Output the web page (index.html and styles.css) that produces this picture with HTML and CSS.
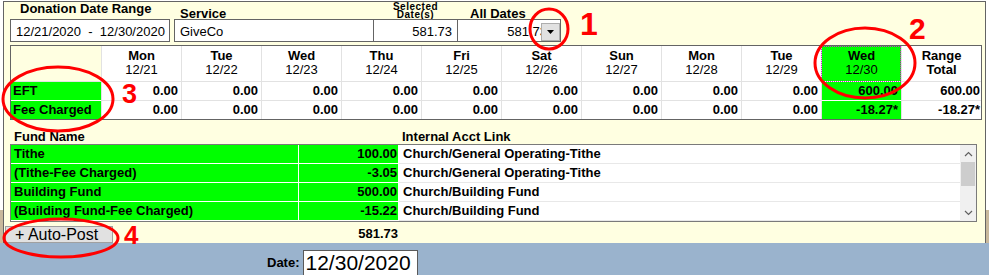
FILE: index.html
```html
<!DOCTYPE html>
<html>
<head>
<meta charset="utf-8">
<link rel="stylesheet" href="styles.css">
</head>
<body>
<div class="screen">
  <div class="top">
    <div class="panel">
      <div class="hdr">
        <div class="fld f-range">
          <div class="lbl">Donation Date Range</div>
          <div class="box">12/21/2020&nbsp;&nbsp;-&nbsp;&nbsp;12/30/2020</div>
        </div>
        <div class="fld f-svc">
          <div class="lbl lbl-low">Service</div>
          <div class="box">GiveCo</div>
        </div>
        <div class="fld f-sel">
          <div class="lbl lbl-small"><span class="ln">Selected</span><span class="ln">Date(s)</span></div>
          <div class="box num">581.73</div>
        </div>
        <div class="fld f-all">
          <div class="lbl lbl-low">All Dates</div>
          <div class="box num">581.73<span class="drop"><svg width="7" height="4" viewBox="0 0 7 4"><polygon points="0,0 7,0 3.5,4" fill="#000"/></svg></span></div>
        </div>
      </div>

      <div class="grid">
        <div class="gc corner"></div>
        <div class="gc gh">Mon<span class="d">12/21</span></div>
        <div class="gc gh">Tue<span class="d">12/22</span></div>
        <div class="gc gh">Wed<span class="d">12/23</span></div>
        <div class="gc gh">Thu<span class="d">12/24</span></div>
        <div class="gc gh">Fri<span class="d">12/25</span></div>
        <div class="gc gh">Sat<span class="d">12/26</span></div>
        <div class="gc gh">Sun<span class="d">12/27</span></div>
        <div class="gc gh">Mon<span class="d">12/28</span></div>
        <div class="gc gh">Tue<span class="d">12/29</span></div>
        <div class="gc gh sel focus">Wed<span class="d">12/30</span></div>
        <div class="gc gh">Range<span class="d b">Total</span></div>

        <div class="gc rl r1">EFT</div>
        <div class="gc v r1">0.00</div>
        <div class="gc v r1">0.00</div>
        <div class="gc v r1">0.00</div>
        <div class="gc v r1">0.00</div>
        <div class="gc v r1">0.00</div>
        <div class="gc v r1">0.00</div>
        <div class="gc v r1">0.00</div>
        <div class="gc v r1">0.00</div>
        <div class="gc v r1">0.00</div>
        <div class="gc v r1 sel">600.00</div>
        <div class="gc v r1 last">600.00</div>

        <div class="gc rl">Fee Charged</div>
        <div class="gc v">0.00</div>
        <div class="gc v">0.00</div>
        <div class="gc v">0.00</div>
        <div class="gc v">0.00</div>
        <div class="gc v">0.00</div>
        <div class="gc v">0.00</div>
        <div class="gc v">0.00</div>
        <div class="gc v">0.00</div>
        <div class="gc v">0.00</div>
        <div class="gc v sel">-18.27*</div>
        <div class="gc v last">-18.27*</div>
      </div>

      <div class="fheads">
        <span class="fh-name">Fund Name</span>
        <span class="fh-link">Internal Acct Link</span>
      </div>

      <div class="list">
        <div class="rows">
          <div class="row"><div class="c-name">Tithe</div><div class="c-amt">100.00</div><div class="c-link">Church/General Operating-Tithe</div></div>
          <div class="row"><div class="c-name">(Tithe-Fee Charged)</div><div class="c-amt">-3.05</div><div class="c-link">Church/General Operating-Tithe</div></div>
          <div class="row"><div class="c-name">Building Fund</div><div class="c-amt">500.00</div><div class="c-link">Church/Building Fund</div></div>
          <div class="row"><div class="c-name">(Building Fund-Fee Charged)</div><div class="c-amt">-15.22</div><div class="c-link">Church/Building Fund</div></div>
        </div>
        <div class="sbar">
          <div class="sb-btn"><svg width="9" height="6" viewBox="0 0 9 6"><path d="M1 5 L4.5 1.5 L8 5" fill="none" stroke="#606060" stroke-width="1.2"/></svg></div>
          <div class="sb-track"><div class="thumb"></div></div>
          <div class="sb-btn"><svg width="9" height="6" viewBox="0 0 9 6"><path d="M1 1 L4.5 4.5 L8 1" fill="none" stroke="#606060" stroke-width="1.2"/></svg></div>
        </div>
      </div>

      <div class="foot">
        <button class="btn">+ Auto-Post</button>
        <span class="total">581.73</span>
      </div>
    </div>
  </div>

  <div class="datebar">
    <span class="dlbl">Date:</span>
    <div class="dbox">12/30/2020</div>
  </div>

  <svg class="marks" width="989" height="275" viewBox="0 0 989 275">
    <ellipse cx="549" cy="29" rx="19" ry="20" fill="none" stroke="#ff0000" stroke-width="3"/>
    <ellipse cx="865" cy="63" rx="50" ry="35" fill="none" stroke="#ff0000" stroke-width="3"/>
    <ellipse cx="58" cy="99" rx="55" ry="32" fill="none" stroke="#ff0000" stroke-width="3"/>
    <ellipse cx="61" cy="238" rx="57" ry="19" fill="none" stroke="#ff0000" stroke-width="3"/>
  </svg>
  <span class="mk mk1">1</span>
  <span class="mk mk2">2</span>
  <span class="mk mk3">3</span>
  <span class="mk mk4">4</span>
</div>
</body>
</html>
```

FILE: styles.css
```css
* { box-sizing: border-box; }
body {
  margin: 0;
  font-family: "Liberation Sans", Arial, sans-serif;
  font-size: 13px;
  color: #000;
  background: #9ab3cd;
}
.screen { position: relative; width: 989px; height: 275px; overflow: hidden; }
.top {
  height: 243px;
  padding: 1px 0 0 3px;
  background: linear-gradient(#ffffff 0 210px, #c8b89c 210px);
}
.panel {
  width: 983px;
  height: 242px;
  border: 1px solid #646464;
  border-bottom: none;
  background: #ffffe1;
}

/* header */
.hdr { display: flex; align-items: flex-start; height: 40px; margin-bottom: 3px; padding-left: 6px; }
.fld { display: flex; flex-direction: column; }
.lbl { height: 17px; font-weight: bold; line-height: 13px; white-space: nowrap; }
.lbl-low { padding-top: 5px; }
.lbl-small {
  display: flex;
  flex-direction: column;
  align-items: center;
  font-size: 10px;
  line-height: 8px;
  letter-spacing: 0.5px;
  padding-top: 1px;
}
.lbl-small .ln { display: block; height: 8px; }
.box {
  height: 23px;
  border: 1px solid #646464;
  background: #fff;
  padding: 2px 5px 0 5px;
  line-height: 19px;
  white-space: nowrap;
}
.num { text-align: right; }
.f-range { width: 160px; }
.f-range .lbl { padding-left: 10px; }
.f-svc { width: 200px; margin-left: 4px; }
.f-svc .lbl { padding-left: 6px; }
.f-sel { width: 85px; margin-left: -1px; }
.f-all { width: 104px; margin-left: -1px; }
.f-all .lbl { padding-left: 13px; }
.f-all .box { position: relative; padding-right: 13px; }
.drop {
  position: absolute;
  right: 0; top: 3px; bottom: 0;
  width: 19px;
  background: #e1e1e1;
  border: 1px solid #adadad;
  display: flex; align-items: center; justify-content: center;
}
.drop svg { display: block; }

/* grid */
.grid {
  margin-left: 6px;
  width: 972px;
  border: 1px solid #646464;
  display: grid;
  grid-template-columns: 90px repeat(11, 80px);
  grid-template-rows: 36px 19px 18px;
}
.gc { border-left: 1px solid #e2e2e2; white-space: nowrap; overflow: hidden; }
.corner { border-left: none; border-bottom: 1px solid #e2e2e2; }
.gh {
  background: #fff;
  text-align: center;
  padding-top: 3px;
  line-height: 14px;
  font-weight: bold;
  border-bottom: 1px solid #e2e2e2;
}
.gh .d { display: block; font-weight: normal; }
.gh .d.b { font-weight: bold; }
.gh.sel { border-bottom-color: #fff; }
.focus { outline: 1px dotted #d020d0; outline-offset: -1px; }
.rl {
  border-left: none;
  background: #00ff00;
  font-weight: bold;
  padding-left: 2px;
  line-height: 18px;
}
.rl.r1 { border-bottom: 1px solid #fff; }
.v {
  background: #fff;
  text-align: right;
  padding-right: 3px;
  font-weight: bold;
  line-height: 18px;
}
.v.r1 { border-bottom: 1px solid #e2e2e2; }
.v.last { padding-right: 1px; }
.sel { background: #00ff00; }
.v.r1.sel { border-bottom-color: #fff; }

/* fund list */
.fheads { display: flex; height: 24px; padding-top: 10px; line-height: 14px; font-weight: bold; }
.fh-name { margin-left: 10px; width: 388px; }
.list {
  margin-left: 6px;
  width: 967px;
  height: 78px;
  border: 1px solid #7a7a7a;
  background: #fff;
  display: flex;
}
.rows { flex: 1; }
.row { display: flex; height: 19px; line-height: 18px; font-weight: bold; white-space: nowrap; }
.c-name { width: 288px; background: #00ff00; border-right: 1px solid #fff; border-bottom: 1px solid #fff; padding-left: 3px; }
.c-amt { width: 100px; background: #00ff00; border-right: 1px solid #fff; border-bottom: 1px solid #fff; text-align: right; padding-right: 1px; }
.c-link { flex: 1; border-bottom: 1px solid #e8e8e8; padding-left: 4px; }
.sbar { width: 16px; background: #f0f0f0; display: flex; flex-direction: column; }
.sb-btn { height: 17px; display: flex; align-items: center; justify-content: center; }
.sb-btn svg { display: block; }
.sb-track { flex: 1; }
.thumb { margin-left: 1px; width: 14px; height: 24px; background: #cdcdcd; }

/* footer */
.foot { display: flex; height: 21px; }
.btn {
  margin: 4px 0 0 1px;
  width: 108px;
  height: 17px;
  padding: 0 0 0 9px;
  border: 1px solid #a0a0a0;
  background: #e1e1e1;
  font-family: "Liberation Sans", Arial, sans-serif;
  font-size: 16px;
  line-height: 14px;
  text-align: left;
  color: #000;
  white-space: nowrap;
  overflow: visible;
}
.total { width: 285px; text-align: right; padding-top: 5px; line-height: 14px; font-weight: bold; }

/* date bar */
.datebar { display: flex; align-items: flex-start; height: 32px; padding-left: 267px; }
.dlbl { font-weight: bold; line-height: 14px; margin-top: 13px; }
.dbox {
  margin: 7px 0 0 3px;
  width: 115px;
  height: 30px;
  border: 1px solid #5a5a5a;
  background: #fff;
  font-size: 21px;
  line-height: 24px;
  padding-left: 2px;
  white-space: nowrap;
}

/* annotations */
.marks { position: absolute; left: 0; top: 0; pointer-events: none; }
.mk { position: absolute; color: #ff0000; font-weight: bold; line-height: 1; }
.mk1 { font-size: 32px; left: 580px; top: 8px; }
.mk2 { font-size: 30px; left: 909px; top: 14px; }
.mk3 { font-size: 27px; left: 122px; top: 81px; }
.mk4 { font-size: 26px; left: 124px; top: 222px; }
```
